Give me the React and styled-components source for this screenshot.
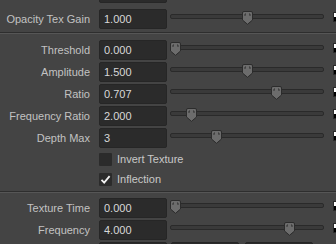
import React from 'react'
import styled, { createGlobalStyle } from 'styled-components'

const GlobalStyle = createGlobalStyle`
  html, body {
    margin: 0;
    padding: 0;
    background: #444444;
  }
  body {
    font-family: "Liberation Sans", Arial, sans-serif;
    font-size: 11px;
  }
`

const Panel = styled.div`
  width: 336px;
  height: 244px;
  overflow: hidden;
  background: #444444;
`

const Stack = styled.div`
  display: flex;
  flex-direction: column;
  margin-top: -18px;
`

const Row = styled.div`
  display: flex;
  align-items: center;
  height: 22px;
  flex-shrink: 0;
  margin-top: ${p => p.$top || 0}px;
`

const Label = styled.div`
  width: 90px;
  margin-right: 9px;
  flex-shrink: 0;
  text-align: right;
  color: #c2c2c2;
  white-space: nowrap;
`

const Field = styled.div`
  box-sizing: border-box;
  width: 68px;
  height: 20px;
  margin-right: ${p => p.$gap || 3}px;
  padding-left: 4px;
  display: flex;
  align-items: center;
  background: #2b2b2b;
  border: 1px solid #262626;
  border-radius: 2px;
  color: #d8d8d8;
  flex-shrink: 0;
`

const SliderBox = styled.div`
  position: relative;
  align-self: flex-start;
  width: 154px;
  height: 22px;
  margin-right: 9px;
  flex-shrink: 0;
`

const Track = styled.div`
  box-sizing: border-box;
  margin-top: 6px;
  height: 5px;
  background: #3a3a3a;
  border: 1px solid #2a2a2a;
  border-radius: 2px;
`

const Handle = styled.svg`
  position: absolute;
  top: 3px;
  width: 11px;
  height: 14px;
`

const MapButton = styled.div`
  box-sizing: border-box;
  align-self: flex-start;
  margin-top: 4px;
  width: 10px;
  height: 10px;
  flex-shrink: 0;
  border: 1px solid #2a2a2a;
  background: linear-gradient(#ffffff 50%, #000000 50%);
`

const Separator = styled.div`
  height: 0;
  border-top: 1px solid #2e2e2e;
  border-bottom: 1px solid #565656;
  margin: 2px 0 ${p => p.$after}px;
  flex-shrink: 0;
`

const CheckRow = styled.div`
  display: flex;
  align-items: center;
  height: 20px;
  padding-left: 99px;
  flex-shrink: 0;
  color: #c8c8c8;
`

const Box = styled.div`
  width: 13px;
  height: 13px;
  margin-right: 5px;
  background: #2b2b2b;
  border-radius: 1px;
  display: flex;
  align-items: center;
  justify-content: center;
`

const SliderHandle = ({ frac }) => (
  <Handle viewBox="0 0 11 14" style={{ left: `calc(${frac} * (100% - 11px))` }}>
    <path
      d="M0.5 2 Q0.5 0.5 2 0.5 H9 Q10.5 0.5 10.5 2 V9 L5.5 13.3 L0.5 9 Z"
      fill="#6c6c6c"
      stroke="#2c2c2c"
    />
    <path d="M3 3 V5 M3 3 H4 M8 3 V5 M8 3 H7" stroke="#333" strokeWidth="1" fill="none" />
  </Handle>
)

const FloatSlider = ({ label, value, min, max, top }) => {
  const frac = Math.min(1, Math.max(0, (parseFloat(value) - min) / (max - min)))
  return (
    <Row $top={top}>
      <Label>{label}</Label>
      <Field>{value}</Field>
      <SliderBox>
        <Track />
        <SliderHandle frac={frac} />
      </SliderBox>
      <MapButton />
    </Row>
  )
}

const Check = ({ label, checked }) => (
  <CheckRow>
    <Box>
      {checked && (
        <svg width="11" height="11" viewBox="0 0 11 11">
          <path d="M1.5 5.8 L4.2 8.6 L9.6 2.2" stroke="#f2f2f2" strokeWidth="1.8" fill="none" />
        </svg>
      )}
    </Box>
    {label}
  </CheckRow>
)

const App = () => (
  <Panel>
    <GlobalStyle />
    <Stack>
      <FloatSlider label="Incand Tex Gain" value="1.000" min={0} max={2} />
      <FloatSlider label="Opacity Tex Gain" value="1.000" min={0} max={2} top={4} />
      <Separator $after={5} />
      <FloatSlider label="Threshold" value="0.000" min={0} max={1} />
      <FloatSlider label="Amplitude" value="1.500" min={0} max={3} />
      <FloatSlider label="Ratio" value="0.707" min={0} max={1} />
      <FloatSlider label="Frequency Ratio" value="2.000" min={1} max={10} />
      <FloatSlider label="Depth Max" value="3" min={1} max={8} />
      <Check label="Invert Texture" />
      <Check label="Inflection" checked />
      <Separator $after={4} />
      <FloatSlider label="Texture Time" value="0.000" min={0} max={1} />
      <FloatSlider label="Frequency" value="4.000" min={0} max={5} />
      <Row>
        <Label>Texture Scale</Label>
        <Field $gap={4}>1.000</Field>
        <Field $gap={6}>1.000</Field>
        <Field>1.000</Field>
      </Row>
    </Stack>
  </Panel>
)

export default App
